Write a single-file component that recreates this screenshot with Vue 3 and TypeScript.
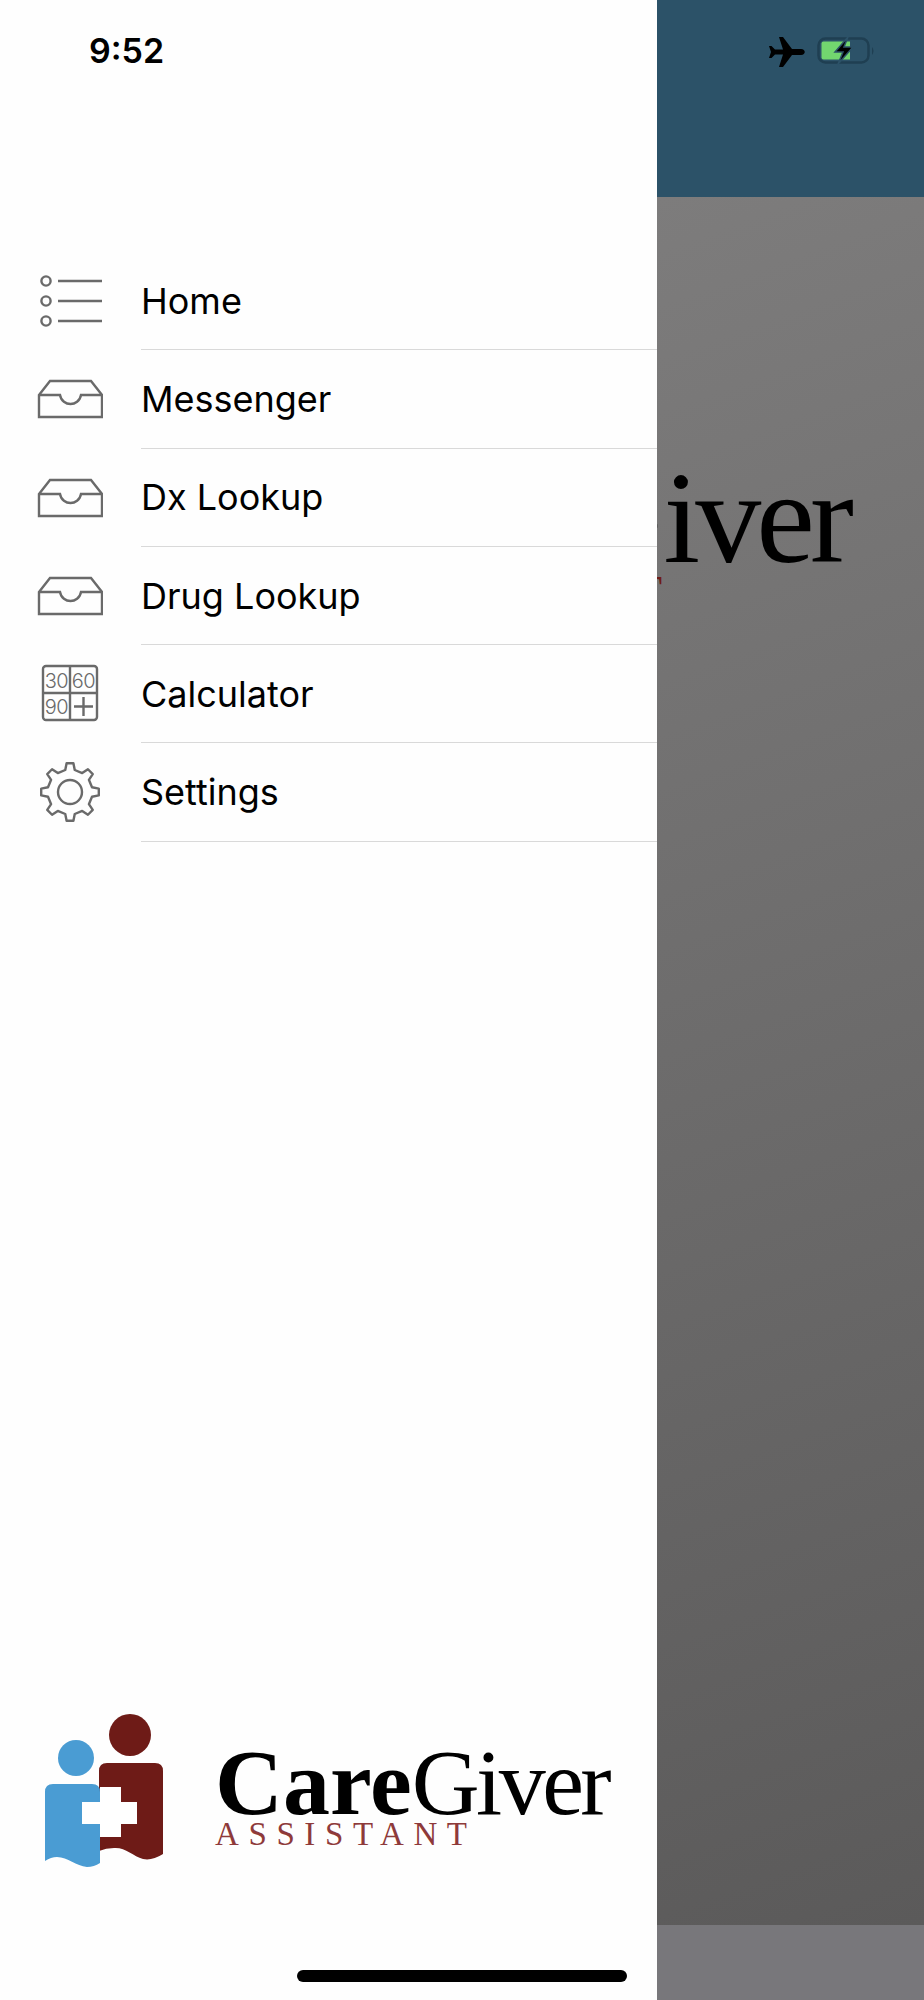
<template>
  <div class="screen">
    <aside class="drawer">
      <div class="status-left">9:52</div>
      <nav class="menu">
        <div class="menu-row" v-for="item in menuItems" :key="item.label">
          <div class="menu-icon">
            <svg v-if="item.icon === 'list'" width="64" height="56" viewBox="0 0 64 56" class="glyph list-glyph">
              <circle cx="7" cy="8" r="4.6" />
              <circle cx="7" cy="28" r="4.6" />
              <circle cx="7" cy="48" r="4.6" />
              <path d="M19 8H63M19 28H63M19 48H63" />
            </svg>
            <svg v-else-if="item.icon === 'tray'" width="66" height="40" viewBox="0 0 66 40" class="glyph tray-glyph">
              <path d="M2 16L13 2H54L65 16V38H2Z" />
              <path d="M2 16H23C24 22 29 25 33.500 25S43 22 44 16H65" />
            </svg>
            <svg v-else-if="item.icon === 'calc'" width="58" height="58" viewBox="0 0 58 58" class="glyph calc-glyph">
              <rect x="2" y="2" width="54" height="54" rx="3" />
              <path d="M29 2V56M2 29H56" />
              <text x="15.500" y="23.500" class="calc-num">30</text>
              <text x="42.500" y="23.500" class="calc-num">60</text>
              <text x="15.500" y="50" class="calc-num">90</text>
              <path d="M33 42.500H52M42.500 33V52" />
            </svg>
            <svg v-else width="64" height="64" viewBox="-32 -32 64 64" class="glyph gear-glyph">
              <path :d="gearPath" stroke-linejoin="round" />
              <circle cx="0" cy="0" r="12" />
            </svg>
          </div>
          <div class="menu-label">{{ item.label }}</div>
        </div>
      </nav>

      <div class="logo">
        <svg class="logo-mark" width="130" height="170" viewBox="40 1710 130 170">
          <circle cx="130" cy="1735" r="21" fill="#6e1b17" />
          <circle cx="76" cy="1758" r="18" fill="#4a9cd3" />
          <path d="M99 1771Q99 1763 107 1763H155Q163 1763 163 1771V1854Q152 1861 143 1859C133 1856 125 1847 114 1848Q106 1848 99 1851Z" fill="#6e1b17" />
          <path d="M45 1792Q45 1784 53 1784H92Q100 1784 100 1792V1863Q94 1867 87 1867C76 1866 68 1857 57 1857Q51 1857 45 1861Z" fill="#4a9cd3" />
          <path d="M100 1787H121V1802H137V1824H121V1837H100V1824H82V1802H100Z" fill="#fff" />
        </svg>
        <div class="wordmark">
          <div class="wordmark-name"><b>Care</b><span class="tight">Giver</span></div>
          <div class="wordmark-sub">ASSISTANT</div>
        </div>
      </div>
    </aside>

    <main class="page">
      <header class="page-header">
        <svg class="plane" width="36" height="30" viewBox="0 0 36 30">
          <path d="M0 9L2.500 9L6 12.500H14L10 0H14L23 12H32C37 12 37 18 32 18H23L14 30H10L14 17.500H6L2.500 21H0L2 15Z" fill="#000" />
        </svg>
        <svg class="battery" width="60" height="28" viewBox="0 0 60 28">
          <rect x="1.500" y="1.500" width="50" height="24" rx="7" fill="none" stroke="#1f3f52" stroke-width="2.500" />
          <path d="M4.500 6.500Q4.500 4.500 6.500 4.500H33V22.500H6.500Q4.500 22.500 4.500 20.500Z" fill="#72d66f" />
          <path d="M55 10Q58 14 55 18Z" fill="#1f3f52" />
          <path d="M31 0L18 15H26L21 27L36 10H27Z" fill="#000" stroke="#2c5268" stroke-width="1.500" />
        </svg>
      </header>
      <div class="page-body">
        <div class="hero">
          <div class="hero-name"><b>Care</b><span class="tight-lg"><span class="hero-g">G</span>iver</span></div>
          <div class="hero-sub">ASSISTANT</div>
        </div>
      </div>
      <div class="page-tabs"></div>
    </main>

    <div class="home-indicator"></div>
  </div>
</template>

<script setup lang="ts">
type IconName = 'list' | 'tray' | 'calc' | 'gear'

const menuItems: { label: string; icon: IconName }[] = [
  { label: 'Home', icon: 'list' },
  { label: 'Messenger', icon: 'tray' },
  { label: 'Dx Lookup', icon: 'tray' },
  { label: 'Drug Lookup', icon: 'tray' },
  { label: 'Calculator', icon: 'calc' },
  { label: 'Settings', icon: 'gear' },
]

// eight teeth, walked around the circle
const gearPoints = (teeth: number, outer: number, root: number) => {
  const step = (Math.PI * 2) / teeth
  const pts: string[] = []
  for (let i = 0; i < teeth; i++) {
    const a = i * step - Math.PI / 2
    const angles: [number, number][] = [
      [a - step * 0.27, root],
      [a - step * 0.15, outer],
      [a + step * 0.15, outer],
      [a + step * 0.27, root],
    ]
    for (const [ang, r] of angles) {
      pts.push(`${(Math.cos(ang) * r).toFixed(2)} ${(Math.sin(ang) * r).toFixed(2)}`)
    }
  }
  return 'M' + pts.join('L') + 'Z'
}

const gearPath = gearPoints(8, 29, 22.5)
</script>

<style scoped>
.screen {
  position: relative;
  display: flex;
  width: 924px;
  height: 2000px;
  overflow: hidden;
  font-family: Inter, "Liberation Sans", sans-serif;
}

.drawer {
  display: flex;
  flex-direction: column;
  flex: 0 0 657px;
  background: #fefefe;
}

.status-left {
  height: 51px;
  padding: 31px 0 0 89px;
  font-size: 34px;
  line-height: 40px;
  font-weight: 600;
  color: #000;
}

.menu {
  margin-top: 170px;
}

.menu-row {
  display: flex;
  height: 98.3px;
}

.menu-icon {
  display: flex;
  flex: 0 0 141px;
  align-items: center;
  padding-left: 38px;
  box-sizing: border-box;
}

.menu-label {
  flex: 1;
  display: flex;
  align-items: center;
  border-bottom: 1px solid #d9d9d9;
  font-size: 36px;
  color: #000;
}

.glyph {
  fill: none;
  stroke: #6a6a6a;
  stroke-width: 2.400;
}

.list-glyph {
  margin-left: 1px;
}

.tray-glyph {
  margin-left: -1px;
}

.calc-glyph {
  margin: -2px 0 0 3px;
}

.gear-glyph {
  margin-top: -2px;
}

.calc-num {
  font-family: Inter, "Liberation Sans", sans-serif;
  font-size: 20px;
  font-weight: 300;
  letter-spacing: -0.5px;
  text-anchor: middle;
  fill: #6a6a6a;
  stroke: none;
}

.logo {
  display: flex;
  align-items: flex-start;
  margin-top: auto;
  padding: 0 0 120px 40px;
}

.wordmark {
  margin: 38px 0 0 45px;
  font-family: "Liberation Serif", serif;
}

.wordmark-name {
  font-size: 94px;
  line-height: 68px;
  color: #000;
  white-space: nowrap;
}

.tight {
  letter-spacing: -3.500px;
}

.wordmark-sub {
  font-size: 33px;
  line-height: 36px;
  letter-spacing: 9.600px;
  color: #8e3a3a;
}

.page {
  display: flex;
  flex-direction: column;
  flex: 1;
  min-width: 0;
}

.page-header {
  display: flex;
  align-items: flex-start;
  height: 197px;
  padding: 37px 0 0 112px;
  box-sizing: border-box;
  background: #2c5268;
}

.plane {
  margin-right: 12px;
}

.page-body {
  display: flex;
  flex: 1;
  justify-content: flex-end;
  padding: 271px 75px 0 0;
  overflow: hidden;
  background: linear-gradient(160deg, #7d7c7c, #5b5a5a);
}

.hero {
  flex-shrink: 0;
  font-family: "Liberation Serif", serif;
}

.hero-name {
  font-size: 132px;
  line-height: 100px;
  color: #000;
  white-space: nowrap;
}

.tight-lg {
  letter-spacing: -4.900px;
}

.hero-g {
  letter-spacing: 2px;
}

.hero-sub {
  font-size: 46px;
  line-height: 50px;
  letter-spacing: 16px;
  color: #6e1b17;
}

.page-tabs {
  height: 75px;
  background: #78777b;
}

.home-indicator {
  position: absolute;
  left: 297px;
  bottom: 18px;
  width: 330px;
  height: 12px;
  border-radius: 6px;
  background: #000;
}
</style>
